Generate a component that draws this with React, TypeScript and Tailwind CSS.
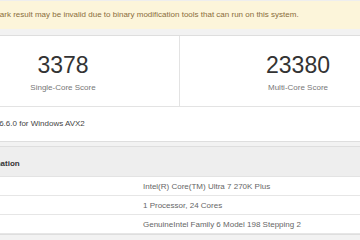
import React from "react";

// One row of the system information table
interface InfoRow {
  label: string;
  value: string;
}

const rows: InfoRow[] = [
  { label: "Name", value: "Intel(R) Core(TM) Ultra 7 270K Plus" },
  { label: "Topology", value: "1 Processor, 24 Cores" },
  { label: "Identifier", value: "GenuineIntel Family 6 Model 198 Stepping 2" },
];

const App: React.FC = () => {
  return (
    <div className="w-[360px] h-[240px] overflow-hidden bg-[#f2f2f2] font-['Liberation_Sans',Arial,sans-serif]">
      <div className="ml-[-54px] w-[471px]">
        {/* Warning */}
        <div className="h-[29px] flex items-center pl-[8px] bg-[#fcf5da] border-t border-[#eee] text-[8px] text-[#8a6d3b]">
          This benchmark result may be invalid due to binary modification tools that can run on this system.
        </div>

        {/* Scores */}
        <div className="mt-[6px] bg-white border border-[#dedede]">
          <div className="grid grid-cols-[233px_1fr]">
            <div className="h-[70px] pt-[18px] flex flex-col items-center border-r border-[#e3e3e3]">
              <span className="text-[23px] leading-[23px] text-[#333]">3378</span>
              <span className="mt-[6px] text-[8px] leading-[10px] text-[#777]">Single-Core Score</span>
            </div>
            <div className="h-[70px] pt-[18px] flex flex-col items-center">
              <span className="text-[23px] leading-[23px] text-[#333]">23380</span>
              <span className="mt-[6px] text-[8px] leading-[10px] text-[#777]">Multi-Core Score</span>
            </div>
          </div>
          <div className="h-[35px] flex items-center pl-[9px] border-t border-[#e3e3e3] text-[8px] text-[#444]">
            Geekbench 6.6.0 for Windows AVX2
          </div>
        </div>

        {/* System information */}
        <div className="mt-[4px] bg-white border border-[#dedede]">
          <div className="h-[30px] pt-[5px] flex items-center bg-[#eeeeee] border-b border-[#e3e3e3] text-[8px] font-bold text-[#333]">
            <span className="ml-[-2px]">System Information</span>
          </div>
          {rows.map((row) => (
            <div
              key={row.label}
              className="h-[19px] pt-[1px] grid grid-cols-[196px_1fr] items-center border-b border-[#e6e6e6] text-[8px] text-[#666]"
            >
              <span className="pl-[8px]" />
              <span>{row.value}</span>
            </div>
          ))}
        </div>
      </div>
    </div>
  );
};

export default App;
